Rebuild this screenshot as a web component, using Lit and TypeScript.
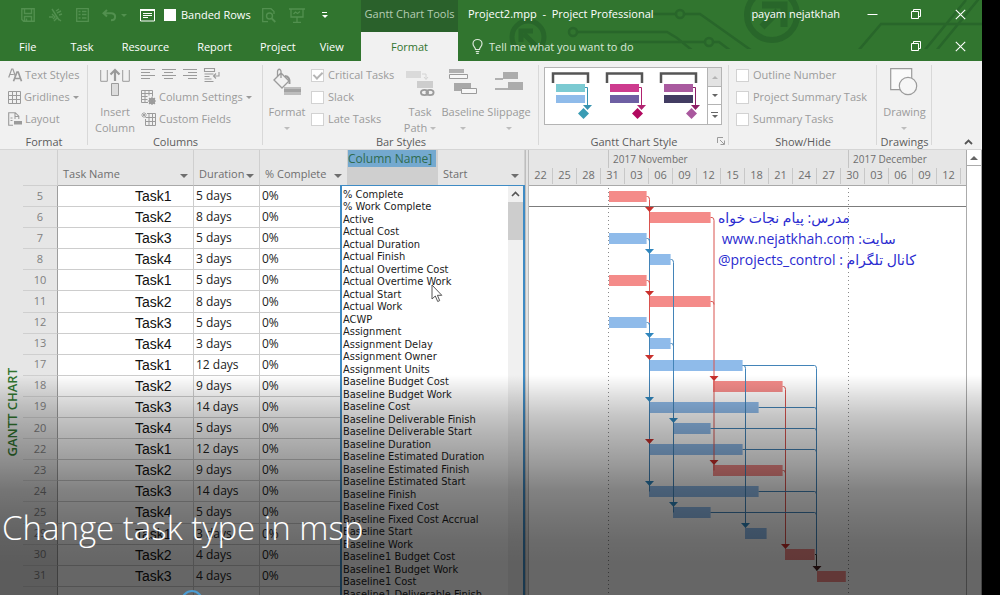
import { LitElement, html, svg, css } from 'lit';
import { customElement, state } from 'lit/decorators.js';
import { classMap } from 'lit/directives/class-map.js';

interface Row {
  id: number;
  name: string;
  days: number;
  start: number; // days from the left edge of the timescale
  length: number; // calendar days covered by the bar
  critical: boolean;
}

const DAY = 8;
const ROW_PITCH = 21.1;

const row = (id: number, name: string, days: number, start: number, length: number, critical = false): Row => ({
  id, name, days, start, length, critical,
});

const ROWS: Row[] = [
  row(5, 'Task1', 5, 10, 4.7, true),
  row(6, 'Task2', 8, 15, 7.7, true),
  row(7, 'Task3', 5, 10, 4.7),
  row(8, 'Task4', 3, 15, 2.7),
  row(10, 'Task1', 5, 10, 4.7, true),
  row(11, 'Task2', 8, 15, 7.7, true),
  row(12, 'Task3', 5, 10, 4.7),
  row(13, 'Task4', 3, 15, 2.7),
  row(17, 'Task1', 12, 15, 11.7),
  row(18, 'Task2', 9, 23, 8.7, true),
  row(19, 'Task3', 14, 15, 13.7),
  row(20, 'Task4', 5, 18, 4.7),
  row(22, 'Task1', 12, 15, 11.7),
  row(23, 'Task2', 9, 23, 8.7, true),
  row(24, 'Task3', 14, 15, 13.7),
  row(25, 'Task4', 5, 18, 4.7),
  row(29, 'Task1', 3, 27, 2.7),
  row(30, 'Task2', 4, 32, 3.7, true),
  row(31, 'Task3', 4, 36, 3.6, true),
];

const FIELDS = [
  '% Complete', '% Work Complete', 'Active', 'Actual Cost', 'Actual Duration', 'Actual Finish',
  'Actual Overtime Cost', 'Actual Overtime Work', 'Actual Start', 'Actual Work', 'ACWP', 'Assignment',
  'Assignment Delay', 'Assignment Owner', 'Assignment Units', 'Baseline Budget Cost',
  'Baseline Budget Work', 'Baseline Cost', 'Baseline Deliverable Finish', 'Baseline Deliverable Start',
  'Baseline Duration', 'Baseline Estimated Duration', 'Baseline Estimated Finish',
  'Baseline Estimated Start', 'Baseline Finish', 'Baseline Fixed Cost', 'Baseline Fixed Cost Accrual',
  'Baseline Start', 'Baseline Work', 'Baseline1 Budget Cost', 'Baseline1 Budget Work',
  'Baseline1 Cost', 'Baseline1 Deliverable Finish',
];

const SCALE = ['22', '25', '28', '31', '03', '06', '09', '12', '15', '18', '21', '24', '27', '30', '03', '06', '09', '12'];

const rowY = (i: number) => Math.round(9.7 + i * ROW_PITCH);

/* ---------- icons ---------- */

const icon = (w: number, h: number, body: unknown) =>
  html`<svg class="icon" width=${w} height=${h} viewBox="0 0 ${w} ${h}" fill="none" stroke="currentColor" aria-hidden="true">${body}</svg>`;

const saveIcon = icon(14, 14, svg`<path d="M.8.8h12.4v12.4H2.6L.8 11.4zM3.5.8v4.7h7V.8M3.5 13V8.5h7V13M5.5 10.5V13" stroke-width="1.4"/>`);
const unlinkIcon = icon(15, 14, svg`<path d="M1 9h4M4 6l3 3-2 2M8 3l3-2M9 5l4-2M11 7l3-1M4 1l7 11M6 13l3-3 4 3" stroke-width="1.4"/>`);
const detailsIcon = icon(13, 14, svg`<path d="M.7.7h11.6v12.6H.7zM2.5 3.5h2M6 3.5h4.5M2.5 6.5h2M6 6.5h4.5M2.5 10h2M6 10h4.5" stroke-width="1.3"/>`);
const undoIcon = icon(15, 13, svg`<path d="M5 1 1.5 4.2 5 7.5M2 4.2h7c5.5 0 5.5 7 0 7" stroke-width="2"/>`);
const noteIcon = icon(15, 13, svg`<path d="M.5 1h14v11H.5zM3 4.500h9M3 6.500h9M3 8.500h5"/><path d="M0 1h15" stroke-width="2"/>`);
const previewIcon = icon(14, 15, svg`<path d="M12 6V3.500L9 .7H.7v13H6" stroke-width="1.3"/><circle cx="7.5" cy="8" r="3" stroke-width="1.4"/><path d="m9.8 10.5 3.5 3.5" stroke-width="1.8"/>`);
const presentIcon = icon(16, 15, svg`<path d="M0 1h16M2 1v8h12V1M8 9v5M4 14.300h8M4.500 6l2-2 2 1.500L11 3.500" stroke-width="1.3"/>`);
const bulbIcon = icon(11, 15, svg`<path d="M3.500 10.500C3.500 8.500 1 7.700 1 4.800a4.500 4.300 0 0 1 9 0c0 2.900-2.500 3.700-2.500 5.700zM3.700 12.500h3.600M4.200 14.300h2.600" stroke-width="1.2"/>`);
const minimizeIcon = icon(11, 11, svg`<path d="M.5 5.500h10"/>`);
const restoreIcon = icon(11, 11, svg`<path d="M.5 2.500h7v7h-7zM2.500 2.500v-2h7v7h-2"/>`);
const closeIcon = icon(11, 11, svg`<path d="m.8.8 9.400 9.400M10.200.8.8 10.200" stroke-width="1.1"/>`);
const collapseIcon = icon(9, 6, svg`<path d="M1 5 4.500 1.500 8 5" stroke-width="1.8"/>`);

const textStylesIcon = icon(14, 14, svg`<path d="M.7 9.500 3.700 1h1.200l2.400 7M1.800 6.500h4" stroke-width="1.2"/><path d="M5.500 13.300 9 4h1.200l3.300 9.300M6.800 10.500h5.500" stroke-width="1.7"/>`);
const gridIcon = icon(13, 13, svg`<path d="M.5.5h12v12H.5zM4.500.5v12M8.500.5v12M.5 4.500h12M.5 8.500h12"/>`);
const layoutIcon = icon(14, 14, svg`<path d="M5 13.300H.7V.7h6.600l3.500 3.500V7M7 .7v3.800h3.800M2.500 6h2M2.500 8.500h2M6 6h2" stroke-width="1.1"/><path d="M6 9h8v3.500H6z" fill="currentColor" stroke="none"/>`);
const insertIcon = icon(30, 28, svg`<path d="M.7 2v11.300h6.600V2M22.700 2v11.300h6.600V2"/><path d="M15 13V3M10.500 6.500 15 2l4.500 4.500" stroke="#9a9a9a" stroke-width="2.2"/><path d="M11.500 15.500h7v12h-7z" fill="#dcdcdc"/>`);
const alignIcon = (x: number) => icon(14, 12, svg`<path d="M0 .5h14M${x} 3.500h9M0 6.500h14M${x} 9.500h9"/>`);
const wrapIcon = icon(16, 14, svg`<path d="M.5.500h10v3H.5zM.5 6h9M.5 8.500h5M.5 11h7M.5 13.500h9M15 4v4h-5M12 5.500 9.500 8l2.500 2.500" stroke-width="1.1"/>`);
const columnSettingsIcon = icon(15, 15, svg`<path d="M7 12.500H.5V.5h11v6M.5 3.500h11M.5 6.500h6M.5 9.500h6M4 .5v12M8 .5v5"/><circle cx="11" cy="11" r="2.3" stroke-width="1.8"/><path d="M11 6.800v8.200M6.800 11H15M8 8l6 6M14 8l-6 6" stroke-width="1.1"/>`);
const customFieldsIcon = icon(15, 14, svg`<path d="M6 1.500h8.500v12h-10V7M4.500 5.500h10M4.500 9.500h10M8 1.500v12M11.500 1.500v12"/><path d="M3 0v6M0 3h6M1 1l4 4M5 1 1 5" stroke-width=".8"/>`);
const bucketIcon = icon(28, 28, svg`<path d="m1 12 7-7 8 8-7 7zM8 10V3.500C8 .5 4.500.5 4.500 3.500V8.500" stroke-width="1.3"/><path d="M12 8c4 .5 5 4 4.500 8" stroke-width="2"/><path d="M11 19h17v8H11z" fill="#bdbdbd" stroke="none"/><path d="M11 21h17v3H11z" fill="#a2a2a2" stroke="none"/>`);
const taskPathIcon = icon(28, 28, svg`<path d="M0 3h15v7H0z" fill="#dadada" stroke="none"/><path d="M16 6h4v5M18 9l2 2.500L22 9" stroke="#d4d4d4"/><path d="M11 13h16v7H11z" fill="#cdcdcd" stroke="none"/><ellipse cx="18.5" cy="24.5" rx="3.6" ry="2.6" stroke-width="1.8"/><ellipse cx="24" cy="24.5" rx="3.6" ry="2.6" stroke-width="1.8"/>`);
const baselineIcon = icon(28, 27, svg`<path d="M0 1h15v4H0z" fill="#b0b0b0" stroke="none"/><path d="M5 15h17v5H12v3H5z" fill="#a8a8a8" stroke="none"/><path d="M.5 6.500h18v4H.5zM12.500 20.500h15v5h-15z" fill="#f7f7f7"/>`);
const slippageIcon = icon(28, 27, svg`<path d="M8 4h15v7H8zM13 14h15v8H13z" fill="#acacac" stroke="none"/><path d="M0 11h8M0 21h13" stroke-width="1.5"/>`);
const drawingIcon = icon(28, 28, svg`<path d="M.7.7h21v21H.7z" fill="#fafafa" stroke-width="1.2"/><circle cx="18" cy="18" r="8.7" fill="#f6f6f6" stroke-width="1.2"/>`);
const launcherIcon = icon(8, 8, svg`<path d="M.5 6V.5H6M3 3l4 4M7.500 3.500v4h-4"/>`);

const styleIcon = (top: string, bottom: string, line: string, diamond: string) =>
  icon(39, 48, svg`
    <path d="M2 12V2.500h35V12" stroke="#555" stroke-width="2.5"/>
    <path d="M5 13h29v8H5z" fill=${top} stroke="none"/>
    <path d="M5 24h29v8H5z" fill=${bottom} stroke="none"/>
    <path d="M34 16.500h2.500V34" stroke=${line}/>
    <path d="M32 34h9l-4.500 5z" fill=${line} stroke="none"/>
    <path d="m32.500 37 5.500 5.500-5.500 5.500-5.500-5.500z" fill=${diamond} stroke="none"/>`);

const arrow = html`<span class="arrow"></span>`;

const sheet = css`
  :host { display: block; font-family: 'Open Sans', 'Noto Sans', sans-serif; font-size: 11px; line-height: 16px; color: #444; }
  * { box-sizing: border-box; }
  button { border: 0; background: none; color: inherit; font: inherit; padding: 0; margin: 0; white-space: nowrap; }
  .icon { display: block; flex: none; overflow: visible; }
  .arrow { display: inline-block; flex: none; border: 3px solid transparent; border-top-color: currentColor; border-bottom: 0; }
`;

/* ---------- title bar and tabs ---------- */

@customElement('title-bar')
class TitleBar extends LitElement {
  static styles = [sheet, css`
    :host { background: #31752f; color: #fff; position: relative; flex: none; }
    .pattern { position: absolute; right: 0; top: 0; color: #28662a; }
    .line { display: flex; position: relative; height: 32px; }
    .tabs { height: 29px; }
    .quick { width: 361px; flex: none; display: flex; align-items: center; padding: 0 34px 2px 21px; gap: 13px; color: #52904f; }
    .quick .on { color: #fff; }
    .undo { display: flex; align-items: center; gap: 4px; }
    .check { display: flex; align-items: center; gap: 5px; color: #fff; white-space: nowrap; margin: 0 -2px 0 -4px; }
    .check input { appearance: none; width: 12px; height: 12px; margin: 0; background: #fff; }
    .more { margin-left: 4px; display: grid; gap: 2px; justify-items: center; color: #fff; }
    .more::before { content: ''; width: 5px; height: 1px; background: #fff; }
    .context { width: 97px; flex: none; background: #2a612b; color: #b5cdb3; text-align: center; line-height: 28px; white-space: nowrap; }
    .doc { flex: 1; min-width: 0; padding-left: 10px; line-height: 28px; white-space: pre; overflow: hidden; }
    .user { line-height: 28px; padding-right: 10px; white-space: nowrap; }
    .win { width: 44px; height: 28px; display: grid; place-items: center; }
    nav { width: 361px; flex: none; display: flex; padding-left: 5px; }
    nav button { padding: 0 14px; line-height: 28px; }
    nav .file { padding-right: 20px; }
    nav button:last-child { padding: 0 0 0 10px; }
    .active { width: 97px; flex: none; background: #f1f1f1; color: #31752f; }
    .tell { flex: 1; display: flex; align-items: center; gap: 6px; padding-left: 14px; color: #dbe8da; }
  `];

  render() {
    return html`
      <svg class="pattern" width="522" height="49" viewBox="460 0 522 49" fill="none" stroke="currentColor" stroke-width="2.5" aria-hidden="true">
        <circle cx="528" cy="37" r="16" stroke-width="5"/>
        <path d="M536 46 524 34M521 42V31h12" stroke-width="5"/>
        <path d="M652 14h24M684 14h16l10 7 45 32M577 32h90l10 6 16 13M618 46l6-4h81M713 42h6l12 9"/>
        <circle cx="680" cy="14" r="4"/><circle cx="573" cy="32" r="4"/><circle cx="709" cy="42" r="4"/>
        <circle cx="772" cy="15" r="25" stroke-width="6"/>
        <path d="M762 27 778 11M762 5h22v22" stroke-width="7"/>
        <path d="m858 51 23-27h101M924 51 966 0M936 51 982-5"/>
      </svg>
      <div class="line">
        <div class="quick">
          <button aria-label="Save">${saveIcon}</button>
          <button aria-label="Unlink Tasks">${unlinkIcon}</button>
          <button aria-label="Task Details">${detailsIcon}</button>
          <button class="undo" aria-label="Undo">${undoIcon}${arrow}</button>
          <button class="on" aria-label="Task Notes">${noteIcon}</button>
          <label class="check"><input type="checkbox">Banded Rows</label>
          <button aria-label="Print Preview">${previewIcon}</button>
          <button aria-label="Present">${presentIcon}</button>
          <button class="more" aria-label="Customize Quick Access Toolbar">${arrow}</button>
        </div>
        <div class="context">Gantt Chart Tools</div>
        <div class="doc">Project2.mpp  -  Project Professional</div>
        <div class="user">payam nejatkhah</div>
        <button class="win" aria-label="Minimize">${minimizeIcon}</button>
        <button class="win" aria-label="Restore">${restoreIcon}</button>
        <button class="win" aria-label="Close">${closeIcon}</button>
      </div>
      <div class="line tabs">
        <nav>
          <button class="file">File</button>
          ${['Task', 'Resource', 'Report', 'Project', 'View'].map((t) => html`<button>${t}</button>`)}
        </nav>
        <button class="active">Format</button>
        <button class="tell">${bulbIcon}<span>Tell me what you want to do</span></button>
        <button class="win" aria-label="Restore Project Window">${restoreIcon}</button>
        <button class="win" aria-label="Close Project Window">${closeIcon}</button>
      </div>`;
  }
}

/* ---------- ribbon ---------- */

@customElement('format-ribbon')
class FormatRibbon extends LitElement {
  static styles = [sheet, css`
    :host { background: #f1f1f1; color: #9b9b9b; border-bottom: 1px solid #d5d5d5; display: flex; flex: none; height: 89px; }
    section { display: grid; grid-template-rows: 66px 20px; padding-top: 3px; flex: none; position: relative; }
    section::after { content: ''; position: absolute; right: 0; top: 4px; bottom: 4px; border-right: 1px solid #d8d8d8; }
    h2 { margin: 0; font: inherit; color: #5c5c5c; text-align: center; line-height: 23px; white-space: nowrap; }
    .body { display: flex; }
    .stack { display: grid; grid-template-rows: repeat(3, 22px); align-items: center; justify-items: start; }
    .stack button, .stack label { display: flex; align-items: center; gap: 4px; white-space: nowrap; }
    .stack .small { gap: 3px; }
    .aligns { display: flex; gap: 7px; }
    .big { display: grid; justify-items: center; align-content: start; grid-template-rows: 36px 16px 16px; padding-top: 4px; text-align: center; }
    .big .arrow { align-self: center; color: #bdbdbd; }
    .path { display: flex; align-items: center; gap: 3px; }
    .f { width: 88px; } .f .body { padding-left: 8px; }
    .c { width: 175px; } .c .body { padding-left: 7px; gap: 6px; }
    .b { width: 276px; } .b .body { padding-left: 4px; }
    .b .stack { padding-left: 4px; width: 93px; }
    .g { width: 190px; } .g .body { padding: 3px 7px 5px 5px; }
    .s { width: 148px; } .s .body { padding-left: 7px; }
    .d { width: 55px; } .d .body { justify-content: center; }
    .w40 { width: 40px; } .w46 { width: 46px; }
    input { appearance: none; width: 13px; height: 13px; margin: 0; background: #fff; border: 1px solid #d2d2d2; display: grid; place-items: center; }
    input:checked::before { content: ''; width: 4px; height: 7px; border: solid #b5b5b5; border-width: 0 2px 2px 0; transform: rotate(45deg); margin-top: -2px; }
    .gallery { flex: 1; display: flex; border: 1px solid #b4b4b4; background: #fff; }
    .choices { flex: 1; display: flex; align-items: start; gap: 15px; padding: 3px 0 0 6px; }
    .scroll { width: 14px; display: grid; grid-template-rows: 19px 18px 1fr; border-left: 1px solid #b4b4b4; color: #666; }
    .scroll button { display: grid; place-content: center; justify-items: center; gap: 2px; border-bottom: 1px solid #b4b4b4; }
    .scroll button:first-child { background: #e3e3e3; color: #b4b4b4; }
    .scroll button:first-child .arrow { rotate: 180deg; }
    .scroll button:last-child { border-bottom: 0; }
    .scroll button:last-child::before { content: ''; width: 7px; height: 1px; background: #666; }
    .launcher { position: absolute; right: 4px; bottom: 4px; }
    .collapse { flex: 1; display: grid; place-items: end center; padding: 0 0 4px 22px; color: #555; }
  `];

  private check(label: string, checked = false) {
    return html`<label><input type="checkbox" ?checked=${checked}>${label}</label>`;
  }

  render() {
    return html`
      <section class="f">
        <div class="body"><div class="stack">
          <button class="small">${textStylesIcon}Text Styles</button>
          <button class="small">${gridIcon}Gridlines${arrow}</button>
          <button class="small">${layoutIcon}Layout</button>
        </div></div>
        <h2>Format</h2>
      </section>
      <section class="c">
        <div class="body">
          <button class="big w40">${insertIcon}<span>Insert</span><span>Column</span></button>
          <div class="stack">
            <div class="aligns">
              <button aria-label="Align Left">${alignIcon(0)}</button>
              <button aria-label="Center">${alignIcon(2)}</button>
              <button aria-label="Align Right">${alignIcon(5)}</button>
              <button aria-label="Wrap Text">${wrapIcon}</button>
            </div>
            <button class="small">${columnSettingsIcon}Column Settings${arrow}</button>
            <button class="small">${customFieldsIcon}Custom Fields</button>
          </div>
        </div>
        <h2>Columns</h2>
      </section>
      <section class="b">
        <div class="body">
          <button class="big w40">${bucketIcon}<span>Format</span>${arrow}</button>
          <div class="stack">${this.check('Critical Tasks', true)}${this.check('Slack')}${this.check('Late Tasks')}</div>
          <button class="big w40">${taskPathIcon}<span>Task</span><span class="path">Path${arrow}</span></button>
          <button class="big w46">${baselineIcon}<span>Baseline</span>${arrow}</button>
          <button class="big w46">${slippageIcon}<span>Slippage</span>${arrow}</button>
        </div>
        <h2>Bar Styles</h2>
      </section>
      <section class="g">
        <div class="body"><div class="gallery">
          <div class="choices">
            <button aria-label="Chart style 1">${styleIcon('#7bcad2', '#8fbbea', '#3793b0', '#3a9cb4')}</button>
            <button aria-label="Chart style 2">${styleIcon('#cd3b8e', '#6e5fa3', '#b0226f', '#b1085f')}</button>
            <button aria-label="Chart style 3">${styleIcon('#a95a9f', '#423c62', '#8d1d66', '#a9589e')}</button>
          </div>
          <div class="scroll">
            <button aria-label="Previous styles">${arrow}</button>
            <button aria-label="Next styles">${arrow}</button>
            <button aria-label="More styles">${arrow}</button>
          </div>
        </div></div>
        <h2>Gantt Chart Style</h2>
        <button class="launcher" aria-label="Format Bar Styles">${launcherIcon}</button>
      </section>
      <section class="s">
        <div class="body"><div class="stack">
          ${this.check('Outline Number')}${this.check('Project Summary Task')}${this.check('Summary Tasks')}
        </div></div>
        <h2>Show/Hide</h2>
      </section>
      <section class="d">
        <div class="body"><button class="big">${drawingIcon}<span>Drawing</span>${arrow}</button></div>
        <h2>Drawings</h2>
      </section>
      <button class="collapse" aria-label="Collapse the Ribbon">${collapseIcon}</button>`;
  }
}

/* ---------- task sheet ---------- */

@customElement('task-sheet')
class TaskSheet extends LitElement {
  static styles = [sheet, css`
    :host { position: relative; overflow: hidden; background: #fff; }
    table { width: 100%; height: 458px; table-layout: fixed; border-spacing: 0; }
    th, td { padding: 0; text-align: left; font-weight: 400; white-space: nowrap; overflow: hidden; line-height: 16px; }
    thead tr { height: 36px; }
    thead th { background: #e6e6e6; color: #6e6e6e; border-bottom: 1px solid #a9a9a9; border-right: 1px solid #cfcfcf; vertical-align: bottom; padding: 0 5px 3px; }
    .head { display: flex; justify-content: space-between; align-items: center; }
    .head .arrow { border-width: 4px; border-bottom: 0; margin-top: 4px; }
    .id { width: 35px; } .name { width: 136px; } .dur { width: 66px; } .pct { width: 88px; } .new { width: 90px; }
    thead .id { border-bottom-color: #cfcfcf; }
    tbody th { background: #e6e6e6; color: #808080; text-align: center; border-bottom: 1px solid #cfcfcf; border-right: 1px solid #9d9d9d; padding-bottom: 1px; }
    td { border-bottom: 1px solid #cdcdcd; border-right: 1px solid #cdcdcd; color: #222; font-size: 12px; padding-left: 2px; }
    td.task { font: 14px/16px 'Liberation Sans', Arial, sans-serif; padding-left: 77px; color: #111; }
    thead .new { background: #cfcfcf; padding: 0; vertical-align: top; }
    .new input { display: block; width: 88px; height: 17px; border: 0; padding: 0; background: #74a9cf; color: #2f6b50; font: 12px/17px 'Open Sans', 'Noto Sans', sans-serif; outline: 0; }
    .popup { position: absolute; left: 317px; right: 0; top: 35px; bottom: 0; display: flex; background: #fff; border: 2px solid #3f8bc4; border-width: 1px 2px 0; overflow: hidden; }
    select { flex: 1; min-width: 0; height: 420px; appearance: none; border: 0; outline: 0; margin: 0; padding: 2px 0 0 1px; overflow: hidden; background: #fff; color: #1b1b1b; font: 11px/12px 'DejaVu Sans Condensed', 'Noto Sans', sans-serif; }
    option { height: 12px; min-height: 12px; line-height: 12px; padding: 0; overflow: visible; }
    option:nth-child(even) { height: 13px; }
    .bar { width: 15px; background: #f0f0f0; color: #555; }
    .bar button { display: grid; place-items: center; width: 100%; height: 16px; }
    .thumb { height: 38px; background: #cdcdcd; }
  `];

  @state() private columnName = 'Column Name]';

  render() {
    const heading = (cls: string, text: string) =>
      html`<th class=${cls} scope="col"><div class="head">${text}${arrow}</div></th>`;
    return html`
      <table>
        <thead><tr>
          <th class="id" scope="col" aria-label="Row"></th>
          ${heading('name', 'Task Name')}${heading('dur', 'Duration')}${heading('pct', '% Complete')}
          <th class="new" scope="col">
            <input type="text" aria-label="Column name" .value=${this.columnName}
              @input=${(e: Event) => (this.columnName = (e.target as HTMLInputElement).value)}>
          </th>
          ${heading('start', 'Start')}
        </tr></thead>
        <tbody>
          ${ROWS.map((r) => html`<tr>
            <th scope="row">${r.id}</th><td class="task">${r.name}</td><td>${r.days} days</td><td>0%</td><td></td><td></td>
          </tr>`)}
          <tr><th>&nbsp;</th><td class="task"></td><td></td><td></td><td></td><td></td></tr>
        </tbody>
      </table>
      <div class="popup">
        <select size="33" aria-label="Field for the new column">${FIELDS.map((f) => html`<option>${f}</option>`)}</select>
        <div class="bar">
          <button aria-label="Scroll up">${icon(9, 6, svg`<path d="M1 5 4.500 1.500 8 5" stroke-width="1.6"/>`)}</button>
          <div class="thumb"></div>
        </div>
      </div>`;
  }
}

/* ---------- gantt chart ---------- */

@customElement('gantt-chart')
class GanttChart extends LitElement {
  static styles = [sheet, css`
    :host { display: flex; flex-direction: column; min-width: 0; background: #fff; overflow: hidden; position: relative; }
    .months { display: grid; grid-template-columns: 79px 240px 1fr; font-size: 10px; line-height: 18px; }
    .months span { border-left: 1px solid #c4c4c4; padding-left: 4px; margin-bottom: 3px; }
    .months span:first-child { border: 0; }
    .scale { flex: none; height: 36px; background: #e6e6e6; color: #6e6e6e; border-bottom: 1px solid #a9a9a9; display: grid; grid-template-rows: 18px 17px; overflow: hidden; }
    .days { display: grid; grid-template-columns: repeat(18, 24px); text-align: center; line-height: 13px; }
    .days span { border-right: 1px solid #c8c8c8; margin-bottom: 1px; }
    .canvas { position: relative; flex: 1; min-height: 0; overflow: hidden; }
    .canvas > svg { display: block; position: absolute; inset: 0; width: 100%; height: 100%; }
    .note { position: absolute; left: 189px; top: 21px; color: #2b2bd0; font: 14px/21px 'Open Sans', 'DejaVu Sans', sans-serif; }
    .note p { margin: 0; white-space: pre; width: max-content; }
    .grid { stroke: #8a8a8a; stroke-dasharray: 1 3; }
    .now { stroke: #7c7c7c; }
    .task { fill: #8fbbea; } .critical { fill: #f48b89; }
    .link { fill: none; stroke: #4384b8; stroke-width: 1; } .hot { stroke: #d9534f; } .dark { stroke: #333; }
    .tip { fill: #2f86bd; } .tip.hot { fill: #c9302c; stroke: none; } .tip.dark { fill: #4a2020; stroke: none; }
  `];

  private tip(x: number, i: number, kind = '') {
    const y = rowY(i) - 5;
    return svg`<path class="tip ${kind}" d="M${x - 4.5} ${y - 5}h9l-4.5 5z"/>`;
  }

  private link(d: string, kind = '') {
    return svg`<path class="link ${kind}" d=${d}/>`;
  }

  /* short elbow from the end of a bar to the vertical link beside it */
  private elbow(i: number, x: number, kind = '') {
    const end = (ROWS[i].start + ROWS[i].length) * DAY;
    return this.link(`M${end} ${rowY(i) + 0.5}H${x - 2}q2 0 2 3`, kind);
  }

  render() {
    const y = (i: number) => rowY(i) + 0.5;
    return html`
      <div class="scale">
        <div class="months"><span></span><span>2017 November</span><span>2017 December</span></div>
        <div class="days">${SCALE.map((d) => html`<span>${d}</span>`)}</div>
      </div>
      <div class="canvas">
        <svg role="img" aria-label="Gantt bars">
          <path class="grid" d="M79.500 2V900M319.500 2V900"/>
          <path class="now" d="M0 20.500H3000"/>
          ${ROWS.map((r, i) => svg`<rect class=${r.critical ? 'critical' : 'task'} x=${r.start * DAY} y=${rowY(i) - 5} width=${r.length * DAY} height="11"/>`)}
          ${this.link(`M120.500 ${y(2)}V${y(4)}M120.500 ${y(6)}V${y(14)}`)}
          ${this.link(`M120.500 ${y(0) + 3}V${y(2)}M120.500 ${y(4)}V${y(6)}`, 'hot')}
          ${this.link(`M144.500 ${y(3) + 3}V${y(15)}`)}
          ${this.link(`M185 ${y(1) + 3}V${y(13)}`, 'hot')}
          ${this.link(`M216.500 ${y(8) + 3}V${y(16) - 6}`)}
          ${this.link(`M256.500 ${y(9) + 3}V${y(17) - 6}`, 'hot')}
          ${this.link(`M287.500 ${y(8) + 3}V${y(17)}`)}
          ${this.link(`M286 ${y(17)}h1.500V${y(18) - 6}`, 'dark')}
          ${[8, 10, 11, 12, 14, 15].map((i) => this.elbow(i, 287.5))}
          ${[0, 4].map((i) => this.elbow(i, 120.5, 'hot'))}${[2, 6].map((i) => this.elbow(i, 120.5))}
          ${[1, 5].map((i) => this.elbow(i, 185, 'hot'))}${[3, 7].map((i) => this.elbow(i, 144.5))}
          ${this.elbow(8, 216.5)}${[9, 13].map((i) => this.elbow(i, 256.5, 'hot'))}
          ${[1, 5, 8, 12].map((i) => this.tip(120.5, i, 'hot'))}${[3, 7, 10, 14].map((i) => this.tip(120.5, i))}
          ${[11, 15].map((i) => this.tip(144.5, i))}${[9, 13].map((i) => this.tip(185, i, 'hot'))}
          ${this.tip(216.5, 16)}${this.tip(256.5, 17, 'hot')}${this.tip(288, 18, 'dark')}
        </svg>
        <div class="note">
          <p dir="rtl">مدرس: پیام نجات خواه</p>
          <p dir="rtl">سایت: <bdi dir="ltr">www.nejatkhah.com</bdi> </p>
          <p dir="rtl">کانال تلگرام : <bdi dir="ltr">@projects_control</bdi></p>
        </div>
      </div>`;
  }
}

/* ---------- page ---------- */

@customElement('app-root')
class AppRoot extends LitElement {
  static styles = [sheet, css`
    :host { position: relative; height: 100vh; overflow: hidden; background: #000; padding-right: 18px; box-sizing: border-box; }
    .app { height: 100%; display: flex; flex-direction: column; background: #fff; }
    main { flex: 1; min-height: 0; display: grid; grid-template-columns: 23px 502px 4px minmax(0, 1fr) 16px; grid-template-rows: minmax(0, 1fr); }
    .view { background: #e6e6e6; display: flex; align-items: end; justify-content: center; }
    .view span { writing-mode: vertical-rl; rotate: 180deg; font-size: 13px; font-weight: 600; line-height: 16px; color: #31752f; margin-bottom: 138px; white-space: nowrap; }
    .split { background: #e3e3e3; border: solid #bdbdbd; border-width: 0 1px; }
    .vscroll { border: solid #ababab; border-width: 0 1px; background: #fff; }
    .vscroll button { display: grid; place-items: center; width: 100%; height: 16px; border-bottom: 1px solid #ababab; color: #666; }
    .vscroll .arrow { border-width: 4px; border-bottom: 0; rotate: 180deg; }
    .shade { position: absolute; inset: auto 0 0 0; height: 220px; pointer-events: none;
      background: linear-gradient(transparent, rgba(0,0,0,.13) 10%, rgba(0,0,0,.22) 18%, rgba(0,0,0,.29) 26%, rgba(0,0,0,.4) 41%, rgba(0,0,0,.49) 52%, rgba(0,0,0,.54) 64%, rgba(0,0,0,.58) 75%, rgba(0,0,0,.6) 85%); }
    .caption { position: absolute; left: 2px; bottom: 43px; margin: 0; color: #fff; font-size: 33px; font-weight: 300; line-height: 48px; white-space: nowrap; }
    .spinner { position: absolute; left: 181px; bottom: -17px; width: 22px; height: 22px; border: 2px solid #4b9cd3; border-radius: 50%; }
    .pointer { position: absolute; left: 431px; top: 284px; }
  `];

  @state() private busy = true;

  render() {
    return html`
      <div class="app">
        <title-bar></title-bar>
        <format-ribbon></format-ribbon>
        <main>
          <div class="view"><span>GANTT CHART</span></div>
          <task-sheet></task-sheet>
          <div class="split"></div>
          <gantt-chart></gantt-chart>
          <div class="vscroll"><button aria-label="Scroll up">${arrow}</button></div>
        </main>
      </div>
      <svg class="pointer" width="12" height="19" viewBox="0 0 12 19" aria-hidden="true"><path d="M1 1v14l3.300-3 2.400 5.500 2-.9L6.400 11.300h4.400z" fill="#fff" stroke="#555"/></svg>
      <div class="shade"></div>
      <h1 class="caption">Change task type in msp</h1>
      <div class=${classMap({ spinner: this.busy })}></div>`;
  }
}
